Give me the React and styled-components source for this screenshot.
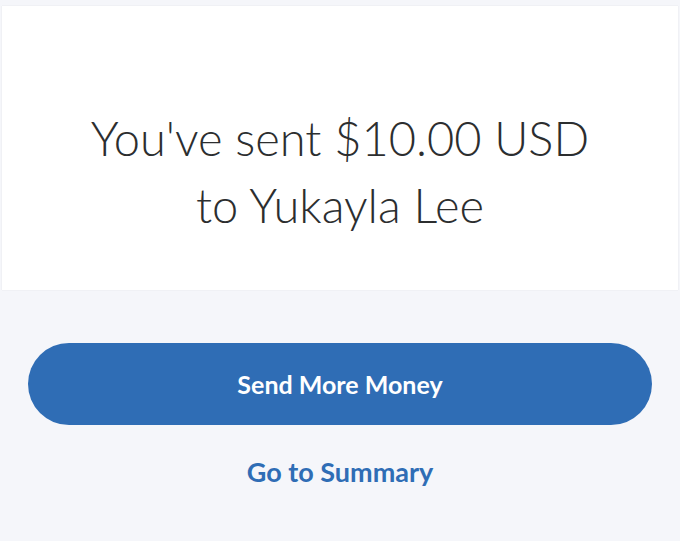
import React from 'react'
import styled, { createGlobalStyle } from 'styled-components'

const Global = createGlobalStyle`
  html, body {
    margin: 0;
    padding: 0;
    background: #f5f6fa;
  }
  #root {
    height: 541px;
  }
`;

const Page = styled.div`
  height: 541px;
  display: flex;
  flex-direction: column;
  align-items: stretch;
  padding: 6px 2px 0 2px;
  box-sizing: border-box;
  background: #f5f6fa;
  font-family: Lato, "Open Sans", sans-serif;
`;

const Card = styled.div`
  background: #ffffff;
  height: 284px;
  display: flex;
  align-items: center;
  justify-content: center;
  box-shadow: 0 0 1px rgba(0, 0, 0, 0.12);
`;

const Title = styled.h1`
  margin: 0;
  padding-top: 48px;
  font-weight: 300;
  font-size: 47px;
  line-height: 67px;
  color: #2c2e2f;
  text-align: center;
`;

const Actions = styled.div`
  display: flex;
  flex-direction: column;
  align-items: center;
  padding: 53px 26px 0 26px;
`;

const PrimaryButton = styled.button`
  width: 100%;
  height: 82px;
  border: none;
  border-radius: 41px;
  background: #2f6db5;
  color: #ffffff;
  font-family: inherit;
  font-weight: 700;
  font-size: 25px;
  cursor: pointer;
`;

const LinkButton = styled.button`
  margin-top: 29px;
  border: none;
  background: none;
  color: #2f6db5;
  font-family: inherit;
  font-weight: 700;
  font-size: 27px;
  cursor: pointer;
`;

export default function App() {
  return (
    <Page>
      <Global />
      <Card>
        <Title>
          You've sent $10.00 USD
          <br />
          to Yukayla Lee
        </Title>
      </Card>
      <Actions>
        <PrimaryButton>Send More Money</PrimaryButton>
        <LinkButton>Go to Summary</LinkButton>
      </Actions>
    </Page>
  )
}
